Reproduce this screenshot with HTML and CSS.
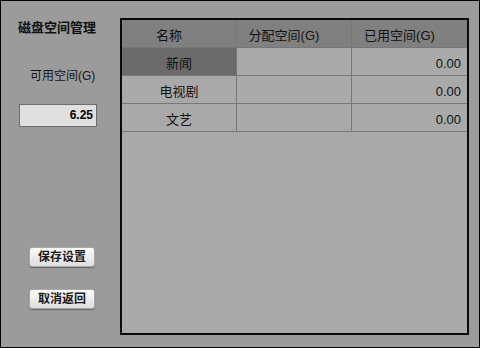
FILE: index.html
```html
<!DOCTYPE html>
<html lang="zh-CN">
<head>
<meta charset="utf-8">
<title>磁盘空间管理</title>
<link rel="stylesheet" href="styles.css">
</head>
<body>
<div class="window">
  <aside class="side">
    <h1 class="title">磁盘空间管理</h1>
    <div class="label">可用空间(G)</div>
    <div class="field">6.25</div>
    <div class="actions">
      <button class="btn">保存设置</button>
      <button class="btn">取消返回</button>
    </div>
  </aside>
  <section class="frame">
    <table class="grid">
      <colgroup><col class="c1"><col class="c2"><col class="c3"></colgroup>
      <thead>
        <tr><th>名称</th><th>分配空间(G)</th><th class="last">已用空间(G)</th></tr>
      </thead>
      <tbody>
        <tr><td class="name selected">新闻</td><td></td><td class="num last">0.00</td></tr>
        <tr><td class="name">电视剧</td><td></td><td class="num last">0.00</td></tr>
        <tr><td class="name">文艺</td><td></td><td class="num last">0.00</td></tr>
      </tbody>
    </table>
  </section>
</div>
</body>
</html>
```
FILE: styles.css
```css
html, body {
  margin: 0;
  padding: 0;
}
body {
  font-family: "Liberation Sans", "Noto Sans CJK SC", sans-serif;
  color: #111;
}
.window {
  width: 480px;
  height: 348px;
  box-sizing: border-box;
  border: 1px solid #000;
  background-color: #9b9b9b;
  display: flex;
  align-items: flex-start;
}
.side {
  width: 119px;
  flex: none;
  display: flex;
  flex-direction: column;
  align-items: flex-start;
}
.title {
  margin: 19px 0 0 17px;
  font-size: 13px;
  line-height: 16px;
  font-weight: bold;
  color: #111;
}
.label {
  margin: 32px 0 0 29px;
  font-size: 12px;
  line-height: 16px;
  color: #151515;
}
.field {
  margin: 20px 0 0 18px;
  width: 78px;
  height: 23px;
  box-sizing: border-box;
  border: 1px solid #6e6e6e;
  background: #e0e0e0;
  text-align: right;
  padding-right: 3px;
  font-size: 12px;
  line-height: 21px;
  font-weight: bold;
  color: #000;
}
.actions {
  margin: 120px 0 0 28px;
  display: flex;
  flex-direction: column;
  gap: 22px;
}
.btn {
  width: 66px;
  height: 20px;
  box-sizing: border-box;
  padding: 0;
  border: 1px solid #a8a8a8;
  border-radius: 3px;
  background: linear-gradient(#fbfbfb, #dedede);
  box-shadow: 0 1px 1px rgba(0, 0, 0, 0.35);
  font-family: "Liberation Sans", "Noto Sans CJK SC", sans-serif;
  font-size: 12px;
  font-weight: bold;
  line-height: 18px;
  color: #1a1a1a;
}
.frame {
  margin-top: 17px;
  width: 349px;
  height: 317px;
  box-sizing: border-box;
  border: 2px solid #0a0a0a;
  background: #a9a9a9;
  flex: none;
}
.grid {
  border-collapse: separate;
  border-spacing: 0;
  table-layout: fixed;
  width: 345px;
  font-size: 13px;
}
.c1, .c2 { width: 115px; }
.c3 { width: 115px; }
.grid th, .grid td {
  padding: 4px 0 0 0;
  line-height: 23px;
  border-right: 1px solid #777;
  border-bottom: 1px solid #777;
  white-space: nowrap;
  overflow: hidden;
}
.grid th {
  background: #808080;
  font-weight: normal;
  text-align: center;
  padding-right: 20px;
  color: #111;
}
.grid td {
  background: #a9a9a9;
}
.grid .last {
  border-right: none;
}
.name {
  text-align: center;
}
.selected {
  background: #6b6b6b !important;
}
.num {
  text-align: right;
  padding-right: 6px !important;
}
```
